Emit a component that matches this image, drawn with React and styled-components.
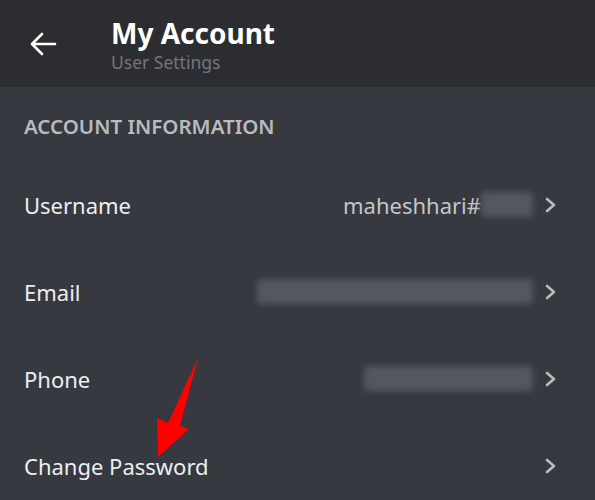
import styled, { createGlobalStyle } from "styled-components";

const GlobalStyle = createGlobalStyle`
  html, body {
    margin: 0;
    padding: 0;
    background: #36393f;
    font-family: "Noto Sans", "Open Sans", sans-serif;
  }
`;

const Screen = styled.div`
  position: relative;
  width: 595px;
  height: 500px;
  overflow: hidden;
  background: #36393f;
`;

const Header = styled.div`
  height: 87px;
  display: flex;
  align-items: center;
  background: #2b2d31;
  padding-left: 28px;
  box-sizing: border-box;
`;

const BackButton = styled.div`
  width: 30px;
  height: 30px;
  display: flex;
  align-items: center;
  justify-content: center;
  margin-right: 53px;
`;

const Titles = styled.div`
  display: flex;
  flex-direction: column;
  gap: 7px;
  margin-top: 3px;
`;

const Title = styled.div`
  font-size: 28px;
  font-weight: 700;
  color: #ffffff;
  line-height: 26px;
`;

const Subtitle = styled.div`
  font-size: 17.5px;
  color: #72767d;
  line-height: 18px;
`;

const SectionTitle = styled.div`
  height: 74px;
  display: flex;
  align-items: center;
  padding-left: 24px;
  padding-top: 3px;
  box-sizing: border-box;
  font-size: 20.5px;
  font-weight: 600;
  color: #b9bbbe;
`;

const Row = styled.div`
  height: 87px;
  display: flex;
  align-items: center;
  padding: 0 38px 0 24px;
`;

const Label = styled.div`
  flex: 1;
  font-size: 22px;
  color: #eceef0;
`;

const Value = styled.div`
  display: flex;
  align-items: center;
  font-size: 22px;
  color: #c4c6c9;
  margin-right: 10px;
`;

const Blur = styled.div`
  width: ${(p) => p.w}px;
  height: 25px;
  background: #54575d;
  filter: blur(3px);
  border-radius: 4px;
`;

const Arrow = styled.svg`
  position: absolute;
  left: 0;
  top: 0;
`;

const Chevron = () => (
  <svg width="14" height="16" viewBox="0 0 14 16">
    <path d="M4 2 L11 8 L4 14" fill="none" stroke="#b9bbbe" strokeWidth="2.6" strokeLinecap="round" strokeLinejoin="round" />
  </svg>
);

const rows = [
  { label: "Username", text: "maheshhari#", blur: 52 },
  { label: "Email", blur: 276 },
  { label: "Phone", blur: 169 },
  { label: "Change Password" },
];

const App = () => {
  return (
    <Screen>
      <GlobalStyle />
      <Header>
        <BackButton>
          <svg width="28" height="24" viewBox="0 0 28 24">
            <path d="M26 12 H3 M13 2 L3 12 L13 22" fill="none" stroke="#ffffff" strokeWidth="2.6" strokeLinecap="round" strokeLinejoin="round" />
          </svg>
        </BackButton>
        <Titles>
          <Title>My Account</Title>
          <Subtitle>User Settings</Subtitle>
        </Titles>
      </Header>
      <SectionTitle>ACCOUNT INFORMATION</SectionTitle>
      {rows.map((r) => (
        <Row key={r.label}>
          <Label>{r.label}</Label>
          {(r.text || r.blur) && (
            <Value>
              {r.text}
              {r.blur && <Blur w={r.blur} />}
            </Value>
          )}
          <Chevron />
        </Row>
      ))}
      <Arrow width="595" height="500" viewBox="0 0 595 500">
        <path d="M198 358 L180 426 L189 429 L158 457 L157 418 L168 423 Z" fill="#ff0000" />
      </Arrow>
    </Screen>
  );
};

export default App;
